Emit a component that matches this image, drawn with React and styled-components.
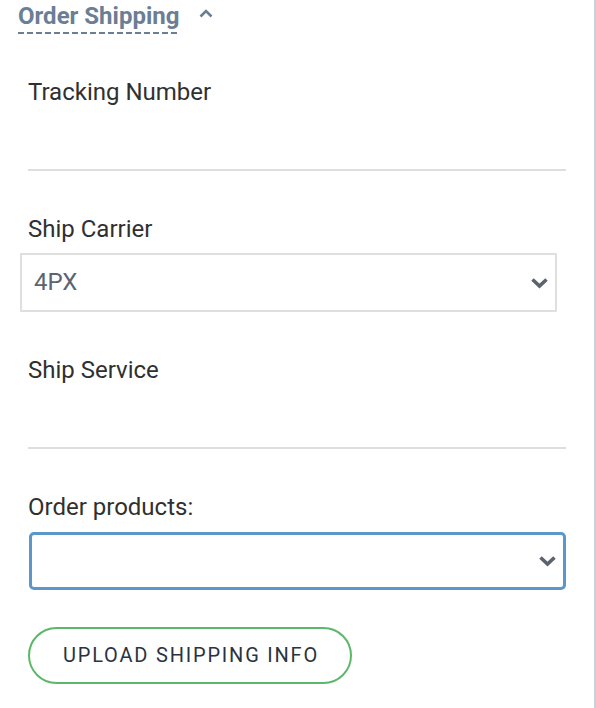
import React, { useState } from 'react';
import styled, { createGlobalStyle } from 'styled-components';

const GlobalStyle = createGlobalStyle`
  html, body {
    margin: 0;
    padding: 0;
    background: #fff;
  }
  * {
    box-sizing: border-box;
  }
`;

const Panel = styled.div`
  font-family: Roboto, 'Liberation Sans', sans-serif;
  width: 596px;
  min-height: 708px;
  background: #fff;
  border-right: 2px solid #c8d1da;
`;

const Header = styled.div`
  display: flex;
  align-items: flex-start;
  padding: 2px 0 0 18px;
  cursor: pointer;
`;

const Title = styled.span`
  font-size: 24px;
  font-weight: 700;
  line-height: 28.8px;
  color: #6b7e95;
  padding-bottom: 3px;
  background: repeating-linear-gradient(to right, #6b7e95 0 6px, transparent 6px 9px) left bottom / 100% 2px no-repeat;
`;

const Caret = styled.svg`
  margin: 7px 0 0 20px;
`;

const Form = styled.div`
  display: flex;
  flex-direction: column;
  padding: 0 28px;
  margin-top: 44px;
`;

const Field = styled.div`
  display: flex;
  flex-direction: column;
  & + & {
    margin-top: 44px;
  }
`;

const Label = styled.label`
  font-size: 24px;
  line-height: 28.8px;
  color: #303030;
  margin-bottom: 10px;
`;

const LineInput = styled.input`
  height: 54px;
  border: none;
  border-bottom: 2px solid #dedede;
  font: inherit;
  font-size: 24px;
  color: #333;
  padding: 0;
  outline: none;
  background: transparent;
`;

const SelectBox = styled.div`
  display: flex;
  align-items: center;
  justify-content: space-between;
  width: 537px;
  height: ${p => (p.$focused ? '58px' : '59px')};
  margin-left: ${p => (p.$focused ? '1px' : '-8px')};
  padding: 0 6px 0 12px;
  border: ${p => (p.$focused ? '3px solid #5b97c8' : '2px solid #dfdfdf')};
  border-radius: ${p => (p.$focused ? '5px' : '1px')};
  background: #fff;
  cursor: pointer;
`;

const SelectValue = styled.span`
  font-size: 24px;
  line-height: 28.8px;
  color: #5a6472;
`;

const UploadButton = styled.button`
  align-self: flex-start;
  margin-top: 37px;
  height: 57px;
  padding: 0 31px 0 33px;
  border: 2px solid #5cb868;
  border-radius: 30px;
  background: #fff;
  font-family: Roboto, 'Liberation Sans', sans-serif;
  font-size: 20px;
  letter-spacing: 1.8px;
  text-transform: uppercase;
  color: #2a3340;
  cursor: pointer;
`;

function Chevron() {
  return (
    <svg width="19" height="12" viewBox="0 0 19 12">
      <path d="M2.5 2.5 L9.5 9 L16.5 2.5" fill="none" stroke="#5b6270" strokeWidth="3.6" />
    </svg>
  );
}

function Select({ value, focused }) {
  return (
    <SelectBox $focused={focused}>
      <SelectValue>{value}</SelectValue>
      <Chevron />
    </SelectBox>
  );
}

export default function App() {
  const [tracking, setTracking] = useState('');
  const [service, setService] = useState('');

  return (
    <Panel>
      <GlobalStyle />
      <Header>
        <Title>Order Shipping</Title>
        <Caret width="14" height="9" viewBox="0 0 14 9">
          <polyline points="1.5,7.5 7,2 12.5,7.5" fill="none" stroke="#6b7e95" strokeWidth="2.6" />
        </Caret>
      </Header>
      <Form>
        <Field>
          <Label>Tracking Number</Label>
          <LineInput value={tracking} onChange={e => setTracking(e.target.value)} />
        </Field>
        <Field>
          <Label>Ship Carrier</Label>
          <Select value="4PX" />
        </Field>
        <Field>
          <Label>Ship Service</Label>
          <LineInput value={service} onChange={e => setService(e.target.value)} />
        </Field>
        <Field>
          <Label>Order products:</Label>
          <Select value="" focused />
        </Field>
        <UploadButton>Upload Shipping Info</UploadButton>
      </Form>
    </Panel>
  );
}
